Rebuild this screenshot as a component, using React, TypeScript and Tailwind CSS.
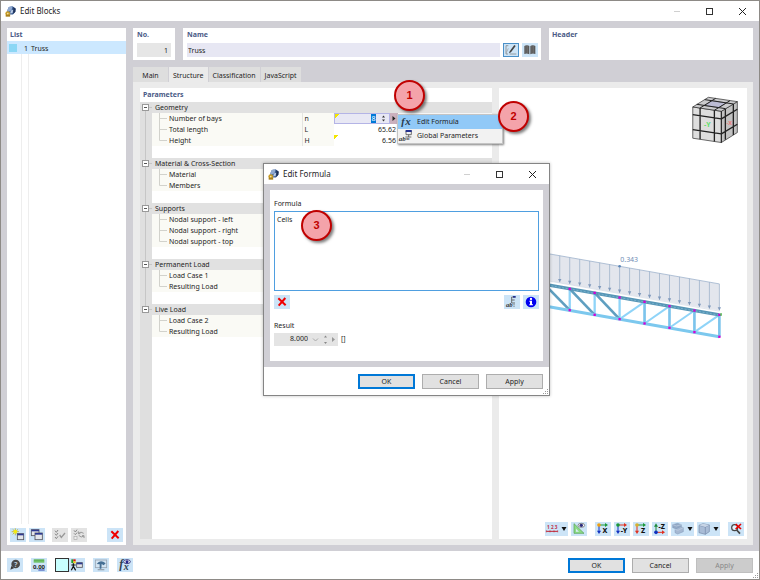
import type { ReactNode } from 'react';

type Row = { label: string; symbol?: string; value?: string; editing?: boolean; marked?: boolean };
type Group = { title: string; rows: Row[] };

const GROUPS: Group[] = [
  {
    title: 'Geometry',
    rows: [
      { label: 'Number of bays', symbol: 'n', value: '8', editing: true },
      { label: 'Total length', symbol: 'L', value: '65.62' },
      { label: 'Height', symbol: 'H', value: '6.56', marked: true },
    ],
  },
  { title: 'Material & Cross-Section', rows: [{ label: 'Material' }, { label: 'Members' }] },
  {
    title: 'Supports',
    rows: [{ label: 'Nodal support - left' }, { label: 'Nodal support - right' }, { label: 'Nodal support - top' }],
  },
  { title: 'Permanent Load', rows: [{ label: 'Load Case 1' }, { label: 'Resulting Load' }] },
  { title: 'Live Load', rows: [{ label: 'Load Case 2' }, { label: 'Resulting Load' }] },
];

const TABS = ['Main', 'Structure', 'Classification', 'JavaScript'];

/* ---------- icons ---------- */

function Glyph({ children }: { children: ReactNode }) {
  return (
    <svg viewBox="0 0 48 42" className="block h-[14px] w-4 shrink-0">
      {children}
    </svg>
  );
}

function AppIcon() {
  return (
    <svg viewBox="0 0 32 32" className="h-[11px] w-[11px] shrink-0">
      <path d="M11 3 L22 1 L31 7 L30 17 L23 25 L12 25 L6 15 Z" fill="#3d5f95" />
      <path d="M11 3 L22 1 L19 12 L10 17 L6 13 Z" fill="#8fa9d0" />
      <path d="M24 3 L31 8 L30 17 L24 23 Z" fill="#1d3158" />
      <path d="M17 13 L24 11 L22 20 L15 22 Z" fill="#b9cbe6" />
      <circle cx="8" cy="22" r="7" fill="#c69a25" />
      <path d="M2 25 H15 V31 H2 Z" fill="#a87f1a" />
      <circle cx="8" cy="22" r="2.5" fill="#f5e2a0" />
    </svg>
  );
}

function CrossIcon() {
  return (
    <Glyph>
      <path d="M13 10 L35 31 M34 9 L14 32" stroke="#f00000" strokeWidth="6" fill="none" />
    </Glyph>
  );
}

function MiniWindow({ x, y, w, h }: { x: number; y: number; w: number; h: number }) {
  return (
    <>
      <rect x={x} y={y} width={w} height={h} fill="#e4e6ea" stroke="#55555f" strokeWidth="2.5" />
      <rect x={x} y={y} width={w} height="5" fill="#2d3990" />
    </>
  );
}

function NewIcon() {
  return (
    <Glyph>
      <path d="M16 1 V22 M5 11 H27 M8 4 L24 19 M24 4 L8 19" stroke="#b8a800" strokeWidth="2" />
      <circle cx="16" cy="11" r="5.5" fill="#f4ea10" />
      <MiniWindow x={22} y={17} w={19} h={18} />
    </Glyph>
  );
}

function CopyIcon() {
  return (
    <Glyph>
      <MiniWindow x={7} y={5} w={23} h={18} />
      <MiniWindow x={18} y={15} w={22} h={20} />
    </Glyph>
  );
}

function CheckAllIcon() {
  return (
    <Glyph>
      <path d="M9 8 L13 13 L18 6 M9 17 L13 22 L18 15 M9 27 L13 32 L18 25" stroke="#888" strokeWidth="3" fill="none" />
      <path d="M23 21 L28 28 L39 15" stroke="#999" strokeWidth="4" fill="none" />
    </Glyph>
  );
}

function CheckSwapIcon() {
  return (
    <Glyph>
      <path d="M9 7 L13 12 L18 5 M9 16 L13 20 L18 14" stroke="#888" strokeWidth="3" fill="none" />
      <rect x="9" y="25" width="9" height="9" fill="#eee" stroke="#aaa" strokeWidth="2" />
      <path d="M22 16 Q30 9 38 16 M39 24 Q30 31 23 22 M22 10 V17 H28 M39 30 V23 H33" stroke="#999" strokeWidth="3" fill="none" />
    </Glyph>
  );
}

function HelpIcon() {
  return (
    <Glyph>
      <path d="M10 35 L13 24 L22 30 Z" fill="#3c3c3c" />
      <circle cx="26" cy="18" r="13" fill="#4a4a4a" />
      <text x="26" y="26" textAnchor="middle" fontSize="22" fontWeight="700" fill="#b9c9d6">?</text>
    </Glyph>
  );
}

function DecimalsIcon() {
  return (
    <Glyph>
      <rect x="8" y="4" width="32" height="10" fill="#6fc267" />
      <path d="M12 4 V9 M18 4 V9 M24 4 V9 M30 4 V9 M36 4 V9" stroke="#3e8a3c" strokeWidth="1.5" />
      <text x="24" y="33" textAnchor="middle" fontSize="18" fontWeight="700" fill="#222">0,00</text>
      <path d="M22 36 H41" stroke="#2a43b0" strokeWidth="3" />
    </Glyph>
  );
}

function DisplayIcon() {
  return (
    <Glyph>
      <rect x="7" y="4" width="6" height="11" fill="#1b9a2b" />
      <rect x="13" y="4" width="7" height="6" fill="#e01010" />
      <rect x="13" y="10" width="7" height="6" fill="#f3c700" />
      <path d="M13 16 V26 M7 37 L13 25 L20 37 M7 21 H20" stroke="#111" strokeWidth="3.5" fill="none" />
      <MiniWindow x={23} y={14} w={17} h={14} />
    </Glyph>
  );
}

function MonitorIcon() {
  return (
    <Glyph>
      <rect x="7" y="6" width="34" height="23" fill="#d3e4f2" stroke="#98a5b2" strokeWidth="2.5" />
      <path d="M11 18 Q22 3 38 16 L32 22 L26 18 L25 32 L20 32 L20 19 Z" fill="#456f94" />
      <path d="M14 35 H34" stroke="#98a5b2" strokeWidth="4" />
    </Glyph>
  );
}

function FxEyeIcon() {
  return (
    <Glyph>
      <text x="7" y="31" fontFamily="Liberation Serif, serif" fontStyle="italic" fontWeight="700" fontSize="36" fill="#33414f">f</text>
      <text x="20" y="35" fontFamily="Liberation Serif, serif" fontStyle="italic" fontWeight="700" fontSize="30" fill="#33414f">x</text>
      <ellipse cx="30" cy="11" rx="10" ry="6" fill="#fff" stroke="#20206a" strokeWidth="2.5" />
      <circle cx="30" cy="11" r="4.5" fill="#26268c" />
    </Glyph>
  );
}

function FxIcon() {
  return (
    <Glyph>
      <text x="10" y="30" fontFamily="Liberation Serif, serif" fontStyle="italic" fontWeight="700" fontSize="31" fill="#26384d">f</text>
      <text x="22" y="30" fontFamily="Liberation Serif, serif" fontStyle="italic" fontWeight="700" fontSize="33" fill="#26384d">x</text>
    </Glyph>
  );
}

function GlobalParamIcon() {
  return (
    <Glyph>
      <path d="M24 5 H40 V17 H24 Z M32 17 V24 M22 24 H40" stroke="#555" strokeWidth="2.5" fill="none" />
      <rect x="23" y="3" width="18" height="6" fill="#23308f" />
      <text x="2" y="36" fontFamily="Liberation Serif, serif" fontStyle="italic" fontWeight="700" fontSize="21" fill="#333">ab=</text>
    </Glyph>
  );
}

function FormulaParamIcon() {
  return (
    <Glyph>
      <path d="M34 6 H23 V24 H33 M23 15 H32" stroke="#555" strokeWidth="2.5" fill="none" />
      <rect x="27" y="3" width="8" height="5" fill="#23308f" />
      <text x="6" y="36" fontFamily="Liberation Serif, serif" fontStyle="italic" fontWeight="700" fontSize="20" fill="#333">ab</text>
      <path d="M30 28 V35" stroke="#333" strokeWidth="2.5" strokeDasharray="2.5 2" />
    </Glyph>
  );
}

function InfoIcon() {
  return (
    <Glyph>
      <circle cx="24" cy="21" r="16" fill="#0000f0" />
      <path d="M19 17 H27 V28 H30 V31 H19 V28 H21 V20 H19 Z" fill="#fff" />
      <circle cx="24" cy="12" r="3.5" fill="#fff" />
    </Glyph>
  );
}

function EditIcon() {
  return (
    <Glyph>
      <path d="M16 8 H9 V33 H15 M20 33 H40" stroke="#777" strokeWidth="2" fill="none" />
      <path d="M18 31 L20 25 L34 6 L38 9 L24 28 Z" fill="#444" />
      <path d="M10 29 L16 16" stroke="#999" strokeWidth="2" />
    </Glyph>
  );
}

function BookIcon() {
  return (
    <Glyph>
      <path d="M7 9 Q15 4 22 9 V34 Q15 29 7 33 Z" fill="#555" />
      <path d="M25 9 Q32 4 40 9 V33 Q32 29 25 34 Z" fill="#555" />
      <path d="M12 8 V31 M17 8 V31 M30 8 V31 M35 8 V31" stroke="#8a8a8a" strokeWidth="1.5" />
    </Glyph>
  );
}

function NumbersIcon() {
  return (
    <Glyph>
      <text x="22" y="20" textAnchor="middle" fontSize="14" fontWeight="700" fill="#c03048">1 2 3</text>
      <path d="M4 28 H38" stroke="#c02030" strokeWidth="3" />
      <path d="M4 25 V31 M15 25 V31 M27 25 V31 M38 25 V31" stroke="#c02030" strokeWidth="2" />
    </Glyph>
  );
}

function ResultEyeIcon() {
  return (
    <Glyph>
      <path d="M9 5 V34 H39 Z" fill="#8edb86" stroke="#4e9e50" strokeWidth="2" />
      <path d="M15 20 V29 H24 Z" fill="#d9ecfa" />
      <ellipse cx="31" cy="10" rx="10" ry="6" fill="#fff" stroke="#555" strokeWidth="2" />
      <circle cx="31" cy="10" r="5" fill="#2b2b7c" />
    </Glyph>
  );
}

function AxisIcon({ label, dot, right, down }: { label: string; dot: string; right: string; down: string }) {
  return (
    <Glyph>
      <path d="M12 9 H32" stroke={right} strokeWidth="3" />
      <path d="M30 3 L39 9 L30 15 Z" fill={right} />
      <path d="M12 9 V28" stroke={down} strokeWidth="3" />
      <path d="M6 26 L12 36 L18 26 Z" fill={down} />
      <circle cx="12" cy="9" r="5.5" fill={dot} />
      <text x="30" y="33" textAnchor="middle" fontSize="21" fontWeight="800" fill="#111">{label}</text>
    </Glyph>
  );
}

function AxisUpIcon() {
  return (
    <Glyph>
      <path d="M12 31 V12" stroke="#1a8a3a" strokeWidth="3" />
      <path d="M6 14 L12 4 L18 14 Z" fill="#1a8a3a" />
      <path d="M12 31 H32" stroke="#e03020" strokeWidth="3" />
      <path d="M30 25 L39 31 L30 37 Z" fill="#e03020" />
      <circle cx="12" cy="31" r="5.5" fill="#1030c0" />
      <text x="29" y="21" textAnchor="middle" fontSize="21" fontWeight="800" fill="#111">-Z</text>
    </Glyph>
  );
}

function SolidsIcon() {
  return (
    <Glyph>
      <path d="M5 8 L20 4 L31 8 V17 L16 21 L5 17 Z" fill="#93a9c6" stroke="#8198b8" strokeWidth="1.5" />
      <path d="M12 22 L28 14 L37 17 V29 L20 36 L12 32 Z" fill="#a5b8d2" stroke="#8198b8" strokeWidth="1.5" />
      <path d="M5 8 L16 12 L31 8 M12 22 L21 25 L37 17" stroke="#c3d2e4" strokeWidth="2" fill="none" />
    </Glyph>
  );
}

function BoxIcon() {
  return (
    <Glyph>
      <path d="M6 10 L18 5 L37 9 V29 L25 37 L6 32 Z" fill="#a9bcd6" stroke="#7388a8" strokeWidth="2" />
      <path d="M6 10 L25 15 V37 M25 15 L37 9" stroke="#7388a8" strokeWidth="2" fill="none" />
      <path d="M6 10 L18 5 L37 9 L25 15 Z" fill="#c8d5e6" />
    </Glyph>
  );
}

function ResetZoomIcon() {
  return (
    <Glyph>
      <circle cx="20" cy="17" r="9" fill="#e6f1fb" stroke="#444" strokeWidth="3.5" />
      <path d="M26 24 L36 35" stroke="#444" strokeWidth="5" />
      <path d="M23 6 L39 21 M39 6 L23 21" stroke="#e80000" strokeWidth="5" />
    </Glyph>
  );
}

/* ---------- controls ---------- */

function IconButton({ label, children, className = 'bg-[#cce4f7]' }: { label: string; children: ReactNode; className?: string }) {
  return (
    <button aria-label={label} className={`flex h-[14px] shrink-0 items-center ${className}`}>
      {children}
    </button>
  );
}

function DropArrow() {
  return (
    <svg viewBox="0 0 7 14" className="block h-[14px] w-[7px]">
      <path d="M0.5 5 H5.5 L3 9 Z" fill="#111" />
    </svg>
  );
}

function PushButton({ children, primary, disabled }: { children: string; primary?: boolean; disabled?: boolean }) {
  const look = primary
    ? 'border-2 border-[#0078d7] bg-[#e1e1e1]'
    : disabled
      ? 'border border-[#bfbfbf] bg-[#cccccc] text-[#888]'
      : 'border border-[#adadad] bg-[#e1e1e1]';
  return (
    <button disabled={disabled} className={`flex h-[15px] w-[57px] items-center justify-center pt-[2px] ${look}`}>
      {children}
    </button>
  );
}

function TitleBar({ title }: { title: string }) {
  return (
    <div className="flex h-5 shrink-0 items-center bg-white pl-1">
      <AppIcon />
      <span className="ml-1 flex-1 text-[8px]">{title}</span>
      <button aria-label="Minimize" className="flex h-full w-[33px] items-center justify-center">
        <span className="h-px w-[6px] bg-[#d0d0d0]" />
      </button>
      <button aria-label="Maximize" className="flex h-full w-[33px] items-center justify-center">
        <span className="h-[7px] w-[7px] border border-[#333]" />
      </button>
      <button aria-label="Close" className="flex h-full w-[33px] items-center justify-center">
        <svg viewBox="0 0 7 7" className="h-[7px] w-[7px]">
          <path d="M0 0 L7 7 M7 0 L0 7" stroke="#222" strokeWidth="1" />
        </svg>
      </button>
    </div>
  );
}

function Grip() {
  return (
    <svg viewBox="0 0 6 6" className="absolute right-0 bottom-0 h-[6px] w-[6px]">
      <path d="M4 0h1v1h-1z M4 2h1v1h-1z M4 4h1v1h-1z M2 2h1v1h-1z M2 4h1v1h-1z M0 4h1v1h-1z" fill="#999" />
    </svg>
  );
}

function Callout({ n, className }: { n: number; className: string }) {
  return (
    <div
      className={`absolute z-40 flex h-[31px] w-[31px] items-center justify-center rounded-full border-2 border-[#c00000] bg-[#f4a3aa] font-['Liberation_Sans',sans-serif] text-[11px] font-bold text-[#c00000] shadow-[2px_2px_3px_rgba(0,0,0,0.5)] ${className}`}
    >
      {n}
    </div>
  );
}

/* ---------- left list ---------- */

function BlockList() {
  return (
    <div className="flex w-[119px] shrink-0 flex-col bg-white">
      <h2 className="h-[13px] px-[3px] leading-[13px] font-bold text-[#4a5a86]">List</h2>
      <div className="flex flex-1">
        <ul className="flex-1 bg-[linear-gradient(90deg,transparent_14px,#eeeeee_14px,#eeeeee_15px,transparent_15px,transparent_21px,#eeeeee_21px,#eeeeee_22px,transparent_22px)]">
          <li className="flex h-[13px] items-center bg-[#cce8ff] px-[2px] leading-[13px]">
            <span className="h-2 w-2 bg-[#8cd7f5]" />
            <span className="w-[11px] pt-px text-right">1</span>
            <span className="ml-[3px] pt-px">Truss</span>
          </li>
        </ul>
      </div>
      <div className="mt-1 flex gap-[3px] px-[3px] pb-[3px]">
        <IconButton label="New"><NewIcon /></IconButton>
        <IconButton label="Copy"><CopyIcon /></IconButton>
        <span className="w-px" />
        <IconButton label="Select all" className="bg-[#e3e3e3]"><CheckAllIcon /></IconButton>
        <IconButton label="Invert selection" className="bg-[#e3e3e3]"><CheckSwapIcon /></IconButton>
        <span className="flex-1" />
        <IconButton label="Delete"><CrossIcon /></IconButton>
      </div>
    </div>
  );
}

/* ---------- parameters ---------- */

function GutterCell({ box, last, first }: { box?: boolean; last?: boolean; first?: boolean }) {
  return (
    <td className="bg-[#dfdfdf] p-0">
      <svg viewBox="0 0 12 11" className="block h-[11px] w-3">
        {!(last && !box) && <path d={first ? 'M5.5 6 V11' : last ? 'M5.5 0 V5' : 'M5.5 0 V11'} stroke="#c6c6c6" />}
        {box && (
          <>
            <rect x="2.5" y="2.5" width="6" height="6" fill="#fff" stroke="#999" />
            <path d="M4 5.5 H7" stroke="#555" />
            <path d="M9 5.5 H12" stroke="#c6c6c6" />
          </>
        )}
      </svg>
    </td>
  );
}

function ValueCell({ row }: { row: Row }) {
  if (row.editing) {
    return (
      <td className="p-0">
        <div className="flex h-[11px] items-center">
          <div className="flex h-[11px] flex-1 items-center justify-end border border-[#b4b4e6] bg-[#e8e8f4] bg-[linear-gradient(135deg,#f2e600_3px,transparent_3px)]">
            <input aria-label="Number of bays" defaultValue="8" className="h-[9px] w-[5px] bg-[#0078d7] p-0 text-center leading-[9px] text-white" />
            <svg viewBox="0 0 13 9" className="h-[9px] w-[13px]">
              <path d="M6 3.5 L7.5 1.5 L9 3.5 Z M6 5.5 L7.5 7.5 L9 5.5 Z" fill="#333" />
            </svg>
          </div>
          <button aria-label="Formula options" className="flex h-[11px] w-2 items-center justify-center bg-[#cbb0bd]">
            <svg viewBox="0 0 4 5" className="h-[5px] w-1"><path d="M0.5 0 L3.5 2.5 L0.5 5 Z" fill="#222" /></svg>
          </button>
        </div>
      </td>
    );
  }
  return (
    <td
      className={`p-0 pr-[2px] text-right ${row.marked ? 'bg-[linear-gradient(135deg,#f2e600_3px,transparent_3px)]' : ''}`}
    >
      {row.value}
    </td>
  );
}

function GroupRows({ group, first, last }: { group: Group; first: boolean; last: boolean }) {
  return (
    <>
      <tr className="h-[11px] bg-[#e1e1e1]">
        <GutterCell box first={first} last={last} />
        <th colSpan={4} className="p-0 pl-[3px] text-left font-normal">{group.title}</th>
      </tr>
      {group.rows.map((row, i) => (
        <tr key={row.label} className="h-[11px]">
          <GutterCell last={last} />
          <td className="border-r border-[#e4e4e0] bg-[#fafaf5] p-0">
            <div className="flex h-[11px] items-center">
              <svg viewBox="0 0 8 11" className="mr-[2px] ml-[7px] h-[11px] w-2">
                <path d={i === group.rows.length - 1 ? 'M.5 0 V5.5 H8' : 'M.5 0 V11 M.5 5.5 H8'} stroke="#d2d2cc" fill="none" />
              </svg>
              {row.label}
            </div>
          </td>
          <td className="bg-[#fafaf5] p-0 pl-[2px]">{row.symbol}</td>
          <ValueCell row={row} />
          <td className="p-0" />
        </tr>
      ))}
      <tr className="h-3">
        <td className="bg-[#dfdfdf] p-0">
          {!last && (
            <svg viewBox="0 0 12 12" className="block h-3 w-3"><path d="M5.5 0 V12" stroke="#c6c6c6" /></svg>
          )}
        </td>
        <td colSpan={4} className="p-0" />
      </tr>
    </>
  );
}

function ParametersPanel() {
  return (
    <div className="relative flex flex-col bg-white">
      <h2 className="h-[14px] px-[3px] leading-[14px] font-bold text-[#4a5a86]">Parameters</h2>
      <table className="w-full table-fixed border-collapse leading-[11px]">
        <colgroup>
          <col className="w-3" />
          <col className="w-[150px]" />
          <col className="w-8" />
          <col className="w-16" />
          <col />
        </colgroup>
        <tbody>
          {GROUPS.map((g, i) => (
            <GroupRows key={g.title} group={g} first={i === 0} last={i === GROUPS.length - 1} />
          ))}
        </tbody>
      </table>
      <div className="w-3 flex-1 bg-[#dfdfdf]" />

      <div role="menu" className="absolute top-[26px] left-[257px] z-20 w-[106px] border border-[#c4c4c4] bg-[#f2f2f2] shadow-[1px_1px_2px_rgba(0,0,0,0.5)]">
        <button role="menuitem" className="flex h-[14px] w-full items-center bg-[#91c9f7]">
          <FxIcon />
          <span className="ml-[3px]">Edit Formula</span>
        </button>
        <button role="menuitem" className="flex h-[14px] w-full items-center">
          <GlobalParamIcon />
          <span className="ml-[3px]">Global Parameters</span>
        </button>
      </div>
    </div>
  );
}

/* ---------- 3D view ---------- */

const TOP_NODES = [[13, 135], [88, 148], [163, 160], [238, 174], [313, 187], [388, 200], [463, 213], [538, 226]];
const BOTTOM_NODES = [[13, 199], [88, 212], [163, 226], [238, 239], [313, 252], [388, 265], [463, 278], [538, 292]];
const LOAD_ARROWS = Array.from({ length: 17 }, (_, i) => 58 + i * 30);

function Truss() {
  return (
    <g transform="translate(540 240) scale(0.3333)">
      <path d="M0 38 L538 133 V213 L0 120 Z" fill="#e3e6ed" />
      <path d="M0 38 L538 133" stroke="#8ea6c4" strokeWidth="2" />
      <path d="M0 120 L538 215" stroke="#c3cddb" strokeWidth="1.5" />
      {LOAD_ARROWS.map((x) => {
        const top = 38 + x * 0.1766;
        const end = 118 + x * 0.1766;
        return (
          <g key={x}>
            <path d={`M${x} ${top} V${end}`} stroke="#93a9c4" strokeWidth="2" />
            <path d={`M${x - 5} ${end - 10} L${x} ${end} L${x + 5} ${end - 10} Z`} fill="#7f99bc" />
          </g>
        );
      })}
      <circle cx="238" cy="80" r="4" fill="#5c86b8" />

      {TOP_NODES.map(([x, y], i) => (
        <path key={i} d={`M${x} ${y} L${BOTTOM_NODES[i][0]} ${BOTTOM_NODES[i][1]}`} stroke={i > 3 ? '#7cc4ec' : '#8fd4f8'} strokeWidth={i > 3 ? 8 : 7} />
      ))}
      {[0, 1, 2].map((i) => (
        <path key={i} d={`M${TOP_NODES[i][0]} ${TOP_NODES[i][1]} L${BOTTOM_NODES[i + 1][0]} ${BOTTOM_NODES[i + 1][1]}`} stroke="#5f9fc0" strokeWidth="8" />
      ))}
      {[3, 4, 5, 6].map((i) => (
        <path key={i} d={`M${BOTTOM_NODES[i][0]} ${BOTTOM_NODES[i][1]} L${TOP_NODES[i + 1][0]} ${TOP_NODES[i + 1][1]}`} stroke="#8fd4f8" strokeWidth="6" />
      ))}
      <path d="M0 197 L538 292" stroke="#7cc8ee" strokeWidth="9" />
      <path d="M0 132 L538 226" stroke="#5796b6" strokeWidth="10" />
      <path d="M0 133 L538 227" stroke="#8abfd8" strokeWidth="2" strokeDasharray="6 5" />
      {[...TOP_NODES, ...BOTTOM_NODES].map(([x, y]) => (
        <rect key={`${x}-${y}`} x={x - 3.5} y={y - 3.5} width="7" height="7" fill="#d400d4" />
      ))}
      <rect x="541" y="221" width="4" height="8" fill="#30b030" />
    </g>
  );
}

function ViewCube() {
  return (
    <g transform="translate(500 0) scale(0.3333)" stroke="#222" strokeLinejoin="round">
      <path d="M578 321 L664 334 V428 L578 415 Z" fill="#dedede" strokeWidth="2" />
      <path d="M664 334 L712 305 V398 L664 428 Z" fill="#c2c2c2" strokeWidth="2" />
      <path d="M578 321 L625 292 L712 305 L664 334 Z" fill="#cbcbcd" strokeWidth="2" />
      <path d="M614 317 L636 302 L679 309 L657 323 Z" fill="#bcbcd4" strokeWidth="1" />
      <path d="M600 324 V418 M643 331 V425 M578 344 L664 357 M578 389 L664 402" strokeWidth="4" fill="none" />
      <path d="M676 327 V420 M700 312 V405 M664 357 L712 328 M664 402 L712 373" strokeWidth="4" fill="none" />
      <path d="M600 324 L647 295 M643 331 L690 302 M590 313 L676 326 M614 299 L700 312" strokeWidth="3" fill="none" />
      <path d="M664 334 V428" strokeWidth="3" fill="none" />
      <text x="622" y="382" textAnchor="middle" fontSize="21" fontWeight="700" fill="#5fe06a" stroke="none">-Y</text>
      <text x="688" y="375" textAnchor="middle" fontSize="17" fontWeight="700" fill="#ee7a7a" stroke="none">-X</text>
    </g>
  );
}

function ModelView() {
  return (
    <div className="relative flex flex-col justify-end overflow-hidden bg-white">
      <svg viewBox="499 88 248 452" preserveAspectRatio="xMaxYMin meet" className="absolute inset-0 h-full w-full">
        <Truss />
        <text x="620" y="262" fontSize="7" fill="#6f8db5">0.343</text>
        <ViewCube />
      </svg>
      <div className="relative flex justify-end gap-[3px] p-[3px]">
        <IconButton label="Numbering"><NumbersIcon /><DropArrow /></IconButton>
        <IconButton label="Show results"><ResultEyeIcon /></IconButton>
        <span className="w-[2px]" />
        <IconButton label="View X"><AxisIcon label="X" dot="#f0a010" right="#1a9a3a" down="#1030c0" /></IconButton>
        <IconButton label="View -Y"><AxisIcon label="-Y" dot="#1a9a3a" right="#e03020" down="#1030c0" /></IconButton>
        <IconButton label="View Z"><AxisIcon label="Z" dot="#d8b030" right="#1a9a3a" down="#e03020" /></IconButton>
        <IconButton label="View -Z"><AxisUpIcon /></IconButton>
        <IconButton label="Rendering"><SolidsIcon /><DropArrow /></IconButton>
        <IconButton label="Box view"><BoxIcon /><DropArrow /></IconButton>
        <span className="w-[2px]" />
        <IconButton label="Reset zoom"><ResetZoomIcon /></IconButton>
      </div>
    </div>
  );
}

/* ---------- formula dialog ---------- */

function FormulaDialog() {
  return (
    <div role="dialog" className="absolute top-[162px] left-[262px] z-30 w-[287px] border border-[#858585] bg-white shadow-[0_0_3px_rgba(0,0,0,0.25)]">
      <TitleBar title="Edit Formula" />
      <div className="bg-[#d0cfd5] p-[6px]">
        <div className="bg-white px-1 pt-2 pb-[15px]">
          <label htmlFor="formula" className="block h-[13px] leading-[11px]">Formula</label>
          <textarea id="formula" defaultValue="Cells" className="block h-20 w-full resize-none border border-[#4f9fe0] px-[2px] py-[3px] leading-[9px]" />
          <div className="mt-1 flex gap-[3px]">
            <IconButton label="Clear formula"><CrossIcon /></IconButton>
            <span className="flex-1" />
            <IconButton label="Insert parameter"><FormulaParamIcon /></IconButton>
            <IconButton label="Info"><InfoIcon /></IconButton>
          </div>
          <label htmlFor="result" className="mt-[11px] block h-[13px] leading-[11px]">Result</label>
          <div className="flex items-center gap-[3px]">
            <div className="flex h-[13px] w-16 items-center bg-[#e4e4e4]">
              <input id="result" readOnly value="8.000" className="w-[34px] bg-transparent text-right" />
              <svg viewBox="0 0 30 13" className="h-[13px] w-[30px]">
                <path d="M5 5.5 L7.5 8 L10 5.5" stroke="#aaa" fill="none" />
                <path d="M16 4.5 L17.5 2.5 L19 4.5 Z M16 9 L17.5 11 L19 9 Z" fill="#888" />
                <path d="M24 4 L27 6.5 L24 9 Z" fill="#999" />
              </svg>
            </div>
            <span>[]</span>
          </div>
        </div>
      </div>
      <div className="relative flex h-7 items-center justify-end gap-[7px] pr-[6px]">
        <PushButton primary>OK</PushButton>
        <PushButton>Cancel</PushButton>
        <PushButton>Apply</PushButton>
        <Grip />
      </div>
    </div>
  );
}

export default function App() {
  return (
    <div className="relative flex min-h-screen flex-col border border-[#8d8a86] bg-white font-['Noto_Sans',sans-serif] text-[7px] text-[#1e1e1e]">
      <TitleBar title="Edit Blocks" />

      <main className="flex flex-1 gap-[7px] bg-[#d0cfd5] px-[6px] pt-[7px] pb-[6px]">
        <BlockList />

        <div className="flex min-w-0 flex-1 flex-col">
          <div className="flex h-8 gap-2">
            <div className="w-[42px] bg-white px-1">
              <label htmlFor="no" className="block h-[15px] leading-[13px] font-bold text-[#4a5a86]">No.</label>
              <input id="no" readOnly value="1" className="block h-[14px] w-full bg-[#e6e6e6] px-[3px] text-right" />
            </div>
            <div className="flex-1 bg-white pr-[3px] pl-1">
              <label htmlFor="name" className="block h-[15px] leading-[13px] font-bold text-[#4a5a86]">Name</label>
              <div className="flex gap-[3px]">
                <input id="name" defaultValue="Truss" className="h-[14px] min-w-0 flex-1 bg-[#e7e7f3] px-px" />
                <IconButton label="Edit name" className="bg-[#cce4f7] outline-1 -outline-offset-1 outline-[#4a90c8]"><EditIcon /></IconButton>
                <IconButton label="Library"><BookIcon /></IconButton>
              </div>
            </div>
            <div className="w-[204px] bg-white px-[3px]">
              <h2 className="leading-[13px] font-bold text-[#4a5a86]">Header</h2>
            </div>
          </div>

          <div role="tablist" className="mt-[7px] flex h-[15px]">
            {TABS.map((tab) => (
              <button
                key={tab}
                role="tab"
                aria-selected={tab === 'Structure'}
                className={`min-w-9 border-r border-[#d0cfd5] px-1 pt-[3px] ${tab === 'Structure' ? 'bg-[#ebebeb]' : 'bg-[#dedede]'}`}
              >
                {tab}
              </button>
            ))}
          </div>

          <div className="grid flex-1 grid-cols-[352fr_248fr] gap-[7px] bg-[#ebebeb] py-[6px] pr-[6px] pl-[7px]">
            <ParametersPanel />
            <ModelView />
          </div>
        </div>
      </main>

      <footer className="relative flex h-7 shrink-0 items-center gap-2 px-[6px]">
        <IconButton label="Help"><HelpIcon /></IconButton>
        <IconButton label="Decimal places"><DecimalsIcon /></IconButton>
        <div className="flex">
          <button aria-label="Color" className="h-[14px] w-[14px] border border-[#333] bg-[#c8ffff]" />
          <IconButton label="Display properties"><DisplayIcon /></IconButton>
        </div>
        <IconButton label="Preview"><MonitorIcon /></IconButton>
        <IconButton label="Formulas"><FxEyeIcon /></IconButton>
        <div className="flex flex-1 justify-end gap-[7px]">
          <PushButton primary>OK</PushButton>
          <PushButton>Cancel</PushButton>
          <PushButton disabled>Apply</PushButton>
        </div>
        <Grip />
      </footer>

      <FormulaDialog />
      <Callout n={1} className="top-[79px] left-[393px]" />
      <Callout n={2} className="top-[100px] left-[497px]" />
      <Callout n={3} className="top-[209px] left-[300px]" />
    </div>
  );
}
